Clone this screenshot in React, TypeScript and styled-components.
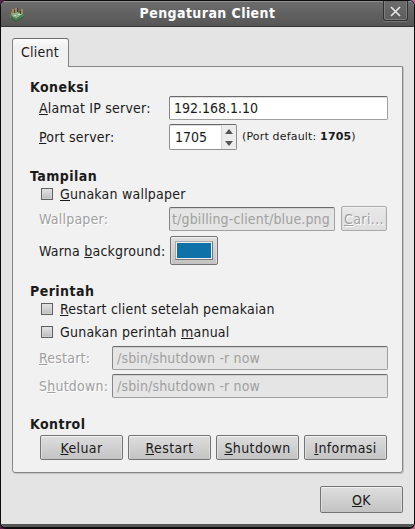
import React from "react";
import styled, { createGlobalStyle, css } from "styled-components";

const GlobalStyle = createGlobalStyle`
  * { box-sizing: border-box; }
  html, body { margin: 0; padding: 0; overflow: hidden; }
  body {
    background: linear-gradient(90deg, #5a2048 0 50%, #b8688c 50%);
    font-family: "DejaVu Sans Condensed", "DejaVu Sans", sans-serif;
    font-stretch: condensed;
    font-size: 14px;
    line-height: 18px;
    letter-spacing: 0.22px;
    color: #1a1a1a;
  }
`;

const Window = styled.div`
  width: 415px;
  height: 529px;
  display: flex;
  flex-direction: column;
  border: 1px solid #0c0c0c;
  border-bottom-width: 2px;
  border-radius: 6px;
  background: #e4e4e4;
  overflow: hidden;
`;

const TitleBar = styled.header`
  height: 26px;
  flex: none;
  display: grid;
  grid-template-columns: 31px 1fr 31px;
  background: linear-gradient(#6c6c6c, #565656);
  border-top: 1px solid #929292;
  border-bottom: 1px solid #353535;
`;

const FrameBottom = styled.div`
  height: 3px;
  flex: none;
  background: #565656;
`;

const AppIcon = styled.svg`
  width: 16px;
  height: 16px;
  margin: 4px 0 0 8px;
`;

const Title = styled.h1`
  margin: 0;
  padding-top: 2px;
  font-size: 14px;
  line-height: 18px;
  font-weight: bold;
  letter-spacing: 0.42px;
  text-align: center;
  color: #fff;
`;

const CloseButton = styled.button`
  width: 25px;
  height: 20px;
  padding: 1px 0 0;
  margin-top: -1px;
  display: flex;
  align-items: center;
  justify-content: center;
  border: 1px solid #303030;
  border-top: 0;
  border-radius: 0 0 3px 3px;
  background: linear-gradient(#6c6c6c, #5c5c5c);
  box-shadow: inset 1px -1px #7e7e7e, inset -1px 0 #7e7e7e, 0 1px #777;
`;

const Body = styled.main`
  flex: 1;
  padding: 11px 11px 0;
  display: flex;
  flex-direction: column;
`;

const Tab = styled.div`
  width: 57px;
  height: 29px;
  padding: 4px 0 0 8px;
  margin-bottom: -1px;
  z-index: 1;
  border: 1px solid #828282;
  border-top-color: #6d6d6d;
  border-bottom: 0;
  border-radius: 3px 3px 0 0;
  background: linear-gradient(#fcfcfc, #f1f1f1 8px);
`;

const Panel = styled.section`
  width: 391px;
  height: 407px;
  padding: 12px 14px 0 17px;
  border: 1px solid #868686;
  border-radius: 0 0 3px 3px;
  background: #f1f1f1;
  box-shadow: 1px 1px #c4c4c4;
`;

const Group = styled.section<{ $height: number }>`
  height: ${(p) => p.$height}px;
`;

const Heading = styled.h2`
  margin: 0;
  height: 17px;
  font-size: 14px;
  line-height: 17px;
  font-weight: bold;
  letter-spacing: 0.45px;
`;

const Row = styled.div<{ $height: number; $gap?: number }>`
  height: ${(p) => p.$height}px;
  margin: 0 0 ${(p) => p.$gap ?? 0}px 9px;
  display: flex;
  align-items: center;
`;

const disabled = css`
  color: #a0a0a0;
  text-shadow: 1px 1px #fff;
`;

const Label = styled.label<{ $width: number; $disabled?: boolean }>`
  width: ${(p) => p.$width}px;
  flex: none;
  white-space: nowrap;
  ${(p) => p.$disabled && disabled}
`;

const Key = styled.span`
  text-decoration: underline;
  text-decoration-thickness: 1px;
  text-underline-offset: 1px;
  text-decoration-skip-ink: none;
`;

const Field = styled.input<{ $width: number; $inset?: number }>`
  width: ${(p) => p.$width}px;
  height: 24px;
  flex: none;
  padding: 0 0 0 ${(p) => p.$inset ?? 4}px;
  border: 1px solid #a0a0a0;
  border-top-color: #6a6a6a;
  border-left-color: #858585;
  border-radius: 2px;
  background: #fff;
  box-shadow: inset 0 1px #ddd;
  font: inherit;
  letter-spacing: 0;
  color: #1a1a1a;
  outline: 0;
  &:disabled {
    background: #e5e5e5;
    color: #a0a0a0;
    box-shadow: inset 0 1px #d2d2d2;
    letter-spacing: 0.16px;
  }
`;

const Spin = styled.div`
  width: 68px;
  height: 26px;
  display: grid;
  grid-template-columns: 1fr 15px;
  border: 1px solid #8e8e8e;
  border-top-color: #6a6a6a;
  border-radius: 2px;
  background: #fff;
  box-shadow: inset 0 1px #ddd;
  letter-spacing: 0;
  overflow: hidden;
`;

const SpinValue = styled.span`
  padding: 3px 0 0 5px;
`;

const Arrows = styled.span`
  border-left: 1px solid #d4d4d4;
  background: #ececec;
  svg { display: block; }
`;

const Hint = styled.span`
  margin-left: 5px;
  font-family: "DejaVu Sans", sans-serif;
  font-stretch: normal;
  font-size: 11px;
  letter-spacing: 0.17px;
  white-space: nowrap;
`;

const Check = styled.span`
  width: 12px;
  height: 12px;
  margin: 0 7px 0 2px;
  flex: none;
  border: 1px solid #606060;
  background: linear-gradient(#e4e4e4, #bcbcbc);
  box-shadow: inset 0 0 0 1px #ddd8;
`;

const Button = styled.button<{ $width: number; $height?: number }>`
  width: ${(p) => p.$width}px;
  height: ${(p) => p.$height ?? 25}px;
  padding: 0;
  flex: none;
  display: flex;
  align-items: center;
  justify-content: center;
  border: 1px solid #747474;
  border-radius: 2px;
  background: linear-gradient(#dedede, #c3c3c3);
  box-shadow: inset 0 1px #f2f2f2, inset 1px 0 #dedede, inset -1px 0 #dedede;
  font: inherit;
  line-height: 18px;
  letter-spacing: 0.4px;
  color: #1a1a1a;
  &:disabled {
    border-color: #aaa;
    background: linear-gradient(#e8e8e8, #dedede);
    ${disabled}
  }
`;

const BrowseButton = styled(Button)`
  margin-left: 6px;
`;

const Swatch = styled.span`
  width: 38px;
  height: 19px;
  border: 1px solid #777;
  border-top-color: #aaa;
  border-left-color: #aaa;
  background: #0e72a8;
  box-shadow: inset 0 0 0 1px #eee;
`;

const ButtonRow = styled.div`
  margin: 2px 0 0 10px;
  display: flex;
  gap: 5px;
`;

const Footer = styled.footer`
  margin-top: 13px;
  display: flex;
  justify-content: flex-end;
`;

export default function App() {
  return (
    <>
      <GlobalStyle />
      <Window>
        <TitleBar>
          <AppIcon viewBox="0 0 16 16" shapeRendering="crispEdges">
            <path d="M1 9l6-4 8 3v4l-8 4-6-4z" fill="#547e59" />
            <path d="M2 9l5-3 7 2-7 4z" fill="#8bb18d" />
            <path d="M2 11l5 3 8-4v2l-8 4-5-3z" fill="#386542" />
            <path d="M3 3h2v4H3zM6 2h2v5H6zM12 3h2v5h-2zM2 6h2v3H2z" fill="#a18b50" />
            <path d="M5 4h1v3H5zM8 2h1v4H8zM11 5h1v3h-1z" fill="#3b3b40" />
            <path d="M5 9h2v1H5zM9 8h3v1H9z" fill="#c6dab8" />
          </AppIcon>
          <Title>Pengaturan Client</Title>
          <CloseButton aria-label="Tutup">
            <svg width="11" height="11" viewBox="0 0 11 11">
              <path d="M1 1L10 10M10 1L1 10" stroke="#e6e6e6" strokeWidth="1.7" />
            </svg>
          </CloseButton>
        </TitleBar>
        <Body>
          <Tab>Client</Tab>
          <Panel>
            <Group $height={89}>
              <Heading>Koneksi</Heading>
              <Row $height={24} $gap={4}>
                <Label $width={130}><Key>A</Key>lamat IP server:</Label>
                <Field $width={219} defaultValue="192.168.1.10" />
              </Row>
              <Row $height={26}>
                <Label $width={130}><Key>P</Key>ort server:</Label>
                <Spin>
                  <SpinValue>1705</SpinValue>
                  <Arrows>
                    <svg width="14" height="24" viewBox="0 0 14 24">
                      <path d="M3 9L7 4L11 9z" fill="#555" />
                      <path d="M3 16L7 21L11 16z" fill="#555" />
                    </svg>
                  </Arrows>
                </Spin>
                <Hint>(Port default: <b>1705</b>)</Hint>
              </Row>
            </Group>
            <Group $height={115}>
              <Heading>Tampilan</Heading>
              <Row $height={18} $gap={3}>
                <Check /><span><Key>G</Key>unakan wallpaper</span>
              </Row>
              <Row $height={25} $gap={5}>
                <Label $width={130} $disabled>Wallpaper:</Label>
                <Field $width={166} $inset={2} disabled defaultValue="t/gbilling-client/blue.png" />
                <BrowseButton $width={46} disabled><span><Key>C</Key>ari...</span></BrowseButton>
              </Row>
              <Row $height={29}>
                <Label $width={131}>Warna <Key>b</Key>ackground:</Label>
                <Button $width={48} $height={29} aria-label="Warna"><Swatch /></Button>
              </Row>
            </Group>
            <Group $height={133}>
              <Heading>Perintah</Heading>
              <Row $height={18} $gap={5}>
                <Check /><span><Key>R</Key>estart client setelah pemakaian</span>
              </Row>
              <Row $height={18} $gap={5}>
                <Check /><span>Gunakan perintah <Key>m</Key>anual</span>
              </Row>
              <Row $height={24} $gap={4}>
                <Label $width={73} $disabled><Key>R</Key>estart:</Label>
                <Field $width={276} disabled defaultValue="/sbin/shutdown -r now" />
              </Row>
              <Row $height={24}>
                <Label $width={73} $disabled>S<Key>h</Key>utdown:</Label>
                <Field $width={276} disabled defaultValue="/sbin/shutdown -r now" />
              </Row>
            </Group>
            <Group $height={45}>
              <Heading>Kontrol</Heading>
              <ButtonRow>
                <Button $width={83}><span><Key>K</Key>eluar</span></Button>
                <Button $width={83}><span><Key>R</Key>estart</span></Button>
                <Button $width={83}><span><Key>S</Key>hutdown</span></Button>
                <Button $width={83}><span><Key>I</Key>nformasi</span></Button>
              </ButtonRow>
            </Group>
          </Panel>
          <Footer>
            <Button $width={83} $height={27}><span><Key>O</Key>K</span></Button>
          </Footer>
        </Body>
        <FrameBottom />
      </Window>
    </>
  );
}
